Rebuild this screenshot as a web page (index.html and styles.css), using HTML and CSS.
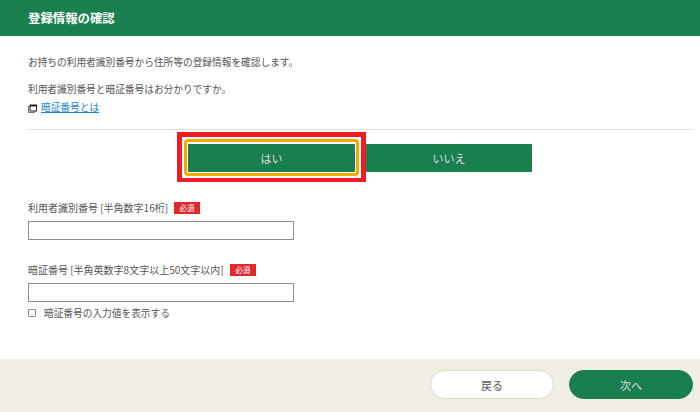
FILE: index.html
```html
<!DOCTYPE html>
<html lang="ja">
<head>
<meta charset="utf-8">
<title>登録情報の確認</title>
<link rel="stylesheet" href="styles.css">
</head>
<body>
<header class="header"><h1 class="title">登録情報の確認</h1></header>
<main class="main">
  <p class="lead">お持ちの利用者識別番号から住所等の登録情報を確認します。</p>
  <p class="question">利用者識別番号と暗証番号はお分かりですか。</p>
  <p class="linkline">
    <svg class="winicon" width="9" height="9" viewBox="0 0 9 9"><rect x="0.5" y="2.5" width="6" height="6" fill="#fff" stroke="#777"/><rect x="2" y="1" width="6.5" height="6" fill="#fff" stroke="#222"/><rect x="2" y="1" width="6.5" height="1.5" fill="#222"/></svg>
    <a class="link" href="#">暗証番号とは</a>
  </p>
  <hr class="rule">
  <div class="choices">
    <div class="highlight"><div class="focus"><button class="choice">はい</button></div></div>
    <button class="choice choice-no">いいえ</button>
  </div>
  <div class="field field-first">
    <div class="label">利用者識別番号 [半角数字16桁]<span class="req">必須</span></div>
    <input class="input" type="text">
  </div>
  <div class="field field-second">
    <div class="label">暗証番号 [半角英数字8文字以上50文字以内]<span class="req">必須</span></div>
    <input class="input" type="text">
    <label class="check"><input class="box" type="checkbox"><span>暗証番号の入力値を表示する</span></label>
  </div>
</main>
<footer class="footer">
  <button class="pill pill-back">戻る</button>
  <button class="pill pill-next">次へ</button>
</footer>
</body>
</html>
```
FILE: styles.css
```css
* { box-sizing: border-box; }
html, body { margin: 0; padding: 0; }
body {
  width: 700px;
  height: 412px;
  overflow: hidden;
  display: flex;
  flex-direction: column;
  background: #fff;
  color: #555;
  font-family: "Noto Sans CJK JP", "Liberation Sans", sans-serif;
  font-size: 9.7px;
}
.header {
  height: 36px;
  background: #1a7f4e;
  padding: 0 28px;
  display: flex;
  align-items: center;
  flex: none;
}
.title { margin: 0; color: #fff; font-size: 12.4px; font-weight: 700; line-height: 1; }
.main { flex: 1; padding: 0 7px 0 28px; }
.lead { margin: 19px 0 0; line-height: 14px; }
.question { margin: 13px 0 0; line-height: 14px; }
.linkline { margin: 4px 0 0; line-height: 14px; display: flex; align-items: center; gap: 4px; }
.winicon { margin-top: 3px; }
.link { color: #1a84c7; text-decoration: underline; }
.rule { margin: 15px 0 0; border: 0; border-top: 1px solid #e0e0e0; }
.choices { display: flex; align-items: flex-start; margin-top: 2px; padding-left: 149px; }
.highlight { border: solid #ee1c25; border-width: 5px 5px 4px; background: #fff; padding: 2px; }
.focus { border: 3px solid #f5a800; border-radius: 4px; padding: 2px 1px 1px; }
.choice {
  display: block;
  width: 167px;
  height: 28px;
  border: 0;
  border-radius: 1px;
  background: #1a7f4e;
  color: #ddd;
  font: inherit;
  font-size: 11px;
  padding: 0;
}
.choice-no { width: 166px; margin-top: 12px; }
.field-first { margin-top: 19px; }
.field-second { margin-top: 23px; }
.label { font-size: 10px; line-height: 14px; display: flex; align-items: center; }
.req {
  margin-left: 6px;
  width: 26px;
  height: 12px;
  background: #e0282e;
  color: #fff;
  font-size: 7.5px;
  line-height: 12px;
  text-align: center;
}
.input {
  display: block;
  width: 266px;
  height: 19px;
  margin-top: 6px;
  border: 1px solid #8f8f8f;
  border-radius: 0;
  background: #fff;
}
.check { display: flex; align-items: center; gap: 8px; margin-top: 4px; line-height: 14px; }
.box { width: 8px; height: 8px; margin: 0; appearance: none; border: 1px solid #8a8a8a; border-radius: 1px; background: #fff; }
.footer {
  flex: none;
  height: 53px;
  background: #f0ede3;
  display: flex;
  justify-content: flex-end;
  align-items: flex-start;
  gap: 15px;
  padding: 11px 7px 0 0;
}
.pill {
  width: 124px;
  height: 29px;
  border-radius: 15px;
  font: inherit;
  font-size: 11px;
  padding: 0;
}
.pill-back { background: #fff; border: 1px solid #ddd8cc; color: #555; }
.pill-next { background: #1a7f4e; border: 1px solid #1a7f4e; color: #ddd; }
```
